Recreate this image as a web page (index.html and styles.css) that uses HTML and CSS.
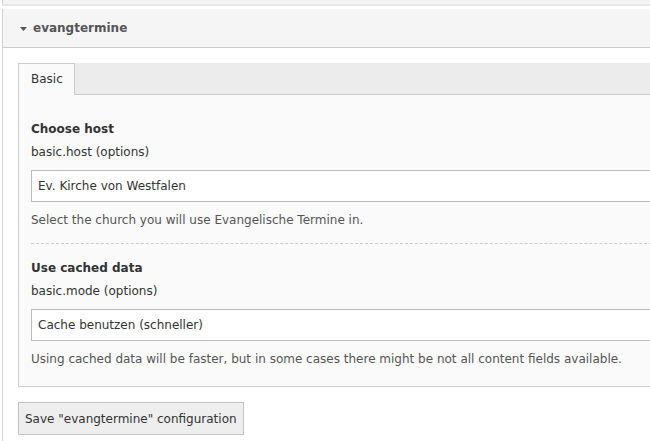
FILE: index.html
```html
<!DOCTYPE html>
<html>
<head>
<meta charset="utf-8">
<link rel="stylesheet" href="styles.css">
</head>
<body>
<div class="panel-group">
  <div class="panel panel-prev"></div>
  <div class="panel">
    <div class="panel-heading">
      <svg class="caret" width="7" height="4" viewBox="0 0 7 4"><path d="M0 0H7L3.5 4Z" fill="#555"/></svg>
      <span class="panel-title">evangtermine</span>
    </div>
    <div class="panel-body">
      <div class="tabs">
        <div class="tab active">Basic</div>
      </div>
      <div class="tab-content">
        <div class="form-section">
          <div class="field-label">Choose host</div>
          <div class="field-name">basic.host (options)</div>
          <div class="select">Ev. Kirche von Westfalen</div>
          <div class="help">Select the church you will use Evangelische Termine in.</div>
        </div>
        <div class="form-section last">
          <div class="field-label">Use cached data</div>
          <div class="field-name">basic.mode (options)</div>
          <div class="select">Cache benutzen (schneller)</div>
          <div class="help">Using cached data will be faster, but in some cases there might be not all content fields available.</div>
        </div>
      </div>
      <button class="btn">Save "evangtermine" configuration</button>
    </div>
  </div>
</div>
</body>
</html>
```
FILE: styles.css
```css
html, body {
  margin: 0;
  padding: 0;
  overflow: hidden;
  background: #fff;
}
body {
  font-family: "DejaVu Sans", sans-serif;
  font-size: 12px;
  line-height: 18px;
  color: #333;
  width: 650px;
}
.panel-group {
  margin-left: 2px;
  width: 720px;
}
.panel {
  border-left: 1px solid #d4d4d4;
  background: #fff;
}
.panel-prev {
  height: 4px;
  background: #f4f4f4;
  border-bottom: 2px solid #e6e6e6;
  margin-bottom: 3px;
}
.panel-heading {
  height: 39px;
  background: #f5f5f5;
  border-bottom: 1px solid #cccccc;
  display: flex;
  align-items: center;
  padding-left: 17px;
  box-sizing: border-box;
}
.caret {
  margin-right: 6px;
  margin-top: 2px;
}
.panel-title {
  font-weight: bold;
  font-size: 12px;
  color: #555;
}
.panel-body {
  padding: 15px 0 10px 15px;
}
.tabs {
  display: flex;
  height: 31px;
  background: #ececec;
  border-bottom: 1px solid #cccccc;
}
.tab {
  padding: 0 11px 0 12px;
  border: 1px solid #cccccc;
  border-bottom: none;
  margin-bottom: -1px;
  height: 32px;
  box-sizing: border-box;
  line-height: 30px;
}
.tab.active {
  background: #fafafa;
}
.tab-content {
  background: #fafafa;
  border-left: 1px solid #cccccc;
  border-bottom: 1px solid #cccccc;
  padding: 25px 0 18px 12px;
}
.form-section {
  border-bottom: 1px dashed #cccccc;
  padding-bottom: 14px;
  margin-bottom: 15px;
}
.form-section.last {
  border-bottom: none;
  padding-bottom: 0;
  margin-bottom: 0;
}
.field-label {
  font-weight: bold;
}
.field-name {
  margin-top: 5px;
}
.select {
  margin-top: 9px;
  height: 32px;
  box-sizing: border-box;
  border: 1px solid #bbbbbb;
  background: #fff;
  padding: 0 6px;
  line-height: 30px;
}
.help {
  margin-top: 9px;
  color: #555;
}
.btn {
  margin-top: 15px;
  font: inherit;
  color: #333;
  background: #eeeeee;
  border: 1px solid #c3c3c3;
  height: 33px;
  padding: 0 6px;
  border-radius: 0;
}
```
